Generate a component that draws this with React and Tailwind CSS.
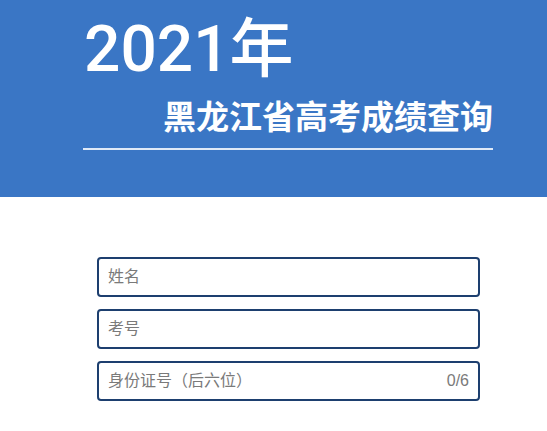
import React, { useState } from "react";

const Field = ({ placeholder, value, onChange, counter }) => {
  return (
    <div className="flex items-center h-[40px] w-[383px] border-2 border-[#1d3f6f] rounded-[4px] px-[9px] bg-white">
      <input
        className="flex-1 min-w-0 outline-none bg-transparent text-[16px] text-[#333] placeholder:text-[#7a7a7a]"
        placeholder={placeholder}
        value={value}
        onChange={onChange}
      />
      {counter && (
        <span className="text-[16px] text-[#7a7a7a] ml-2">
          {value.length}/6
        </span>
      )}
    </div>
  );
};

const App = () => {
  const [name, setName] = useState("");
  const [examNo, setExamNo] = useState("");
  const [idNo, setIdNo] = useState("");

  return (
    <div
      className="min-h-screen bg-white"
      style={{ fontFamily: '"Liberation Sans", "Noto Sans CJK SC", sans-serif' }}
    >
      <div className="h-[197px] bg-[#3a76c5] pt-[18px] pl-[83px]">
        <div className="w-[410px]">
          <h1 className="font-['Roboto','Noto_Sans_CJK_SC',sans-serif] text-[64px] leading-none text-white font-medium pl-[1px]">
            2021年
          </h1>
          <h2 className="mt-[16px] text-[33px] leading-[40px] font-bold text-white text-right">
            黑龙江省高考成绩查询
          </h2>
          <div className="mt-[10px] h-[2px] bg-[#dfe9f7]" />
        </div>
      </div>

      <div className="pt-[60px] pl-[97px] flex flex-col gap-[12px]">
        <Field
          placeholder="姓名"
          value={name}
          onChange={(e) => setName(e.target.value)}
        />
        <Field
          placeholder="考号"
          value={examNo}
          onChange={(e) => setExamNo(e.target.value)}
        />
        <Field
          placeholder="身份证号（后六位）"
          value={idNo}
          onChange={(e) => setIdNo(e.target.value.slice(0, 6))}
          counter
        />
      </div>
    </div>
  );
};

export default App;
